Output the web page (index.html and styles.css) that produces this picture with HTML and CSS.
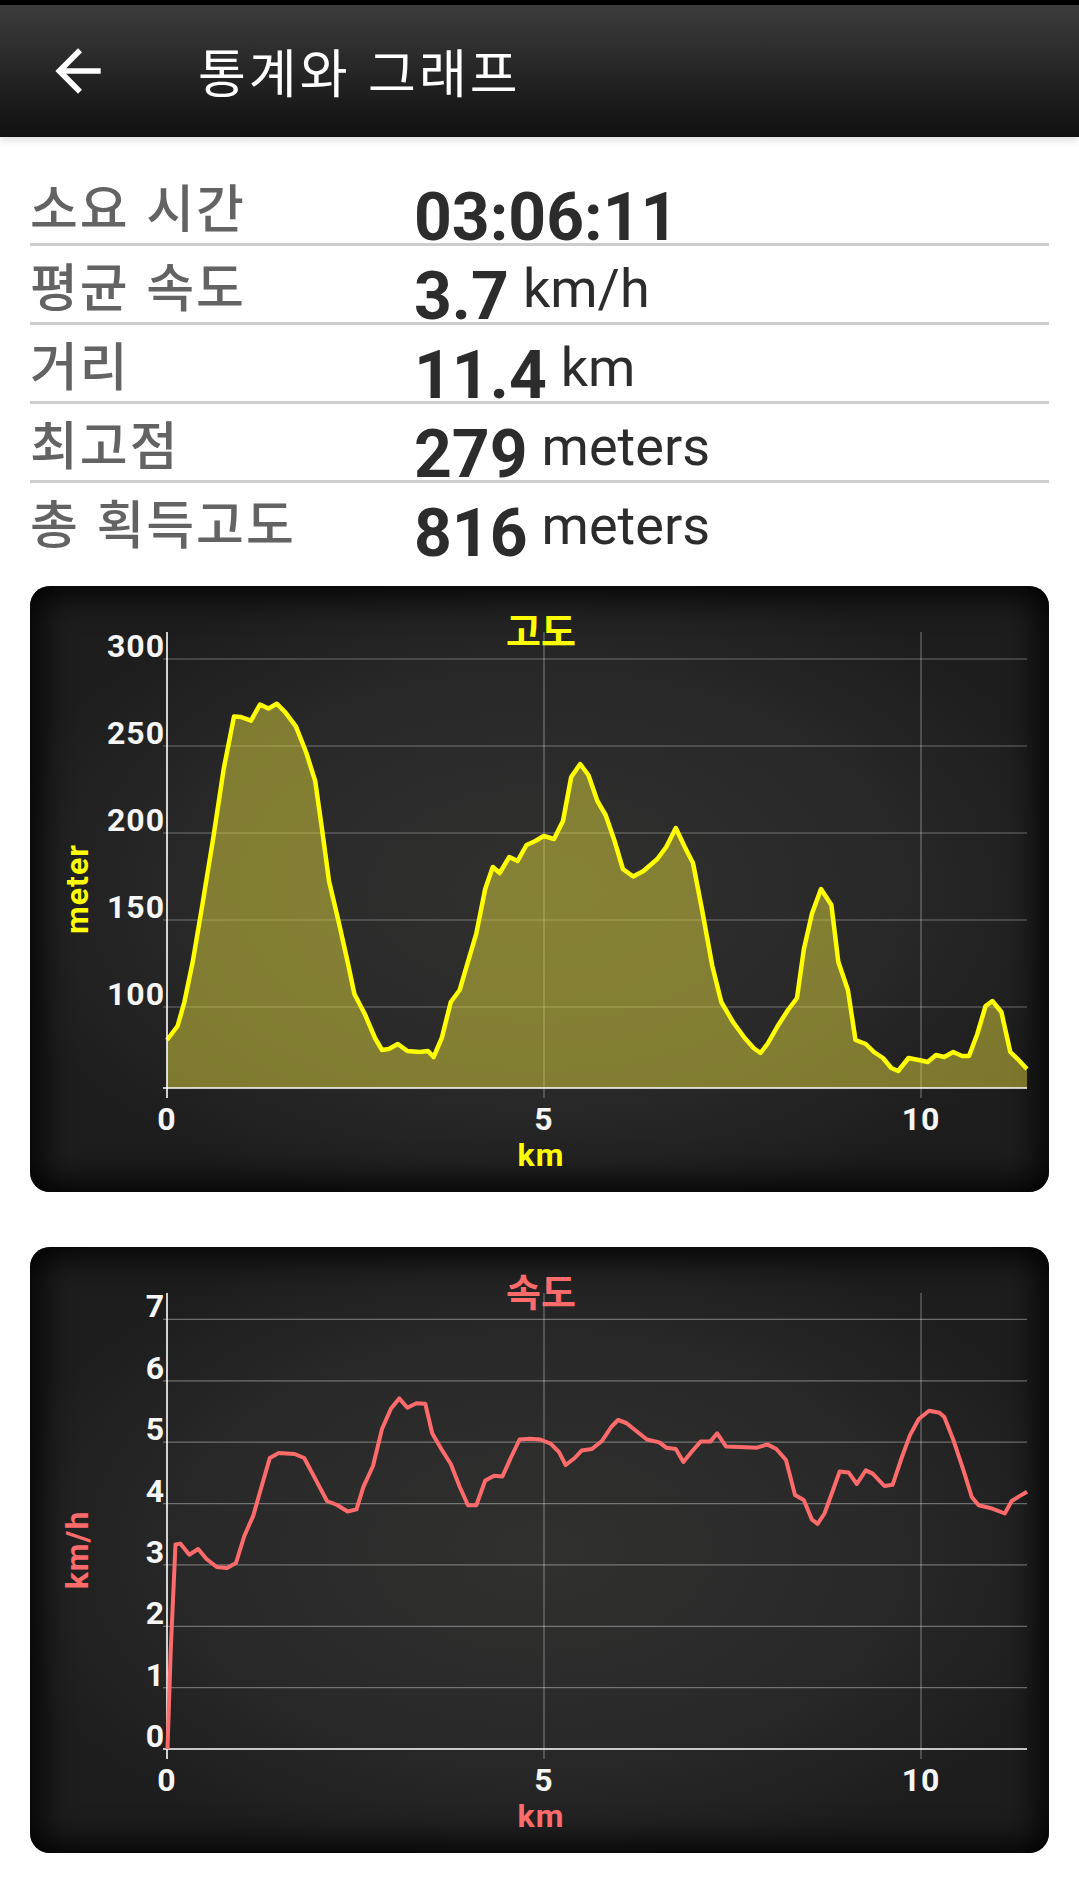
FILE: index.html
```html
<!DOCTYPE html>
<html lang="ko">
<head>
  <meta charset="UTF-8" />
  <meta name="viewport" content="width=device-width, initial-scale=1.0" />
  <title>통계와 그래프</title>
  <link rel="stylesheet" href="styles.css">
</head>
<body>
<header class="toolbar">
  <button class="back-btn" type="button" aria-label="뒤로">
    <svg viewBox="0 0 24 24"><path d="M20 11H7.83l5.59-5.59L12 4l-8 8 8 8 1.41-1.41L7.83 13H20v-2z"/></svg>
  </button>
  <h1>통계와 그래프</h1>
</header>

<main class="content">
  <section class="stats">
    <div class="stat-row">
      <span class="stat-label">소요 시간</span>
      <span class="stat-value">03:06:11</span>
    </div>
    <div class="stat-row">
      <span class="stat-label">평균 속도</span>
      <span class="stat-value">3.7<span class="unit">km/h</span></span>
    </div>
    <div class="stat-row">
      <span class="stat-label">거리</span>
      <span class="stat-value">11.4<span class="unit">km</span></span>
    </div>
    <div class="stat-row">
      <span class="stat-label">최고점</span>
      <span class="stat-value">279<span class="unit">meters</span></span>
    </div>
    <div class="stat-row">
      <span class="stat-label">총 획득고도</span>
      <span class="stat-value">816<span class="unit">meters</span></span>
    </div>
  </section>

  <!-- elevation chart -->
  <section class="chart-card">
    <svg class="chart elevation" viewBox="0 0 1019 606">
      <g class="grid">
        <line x1="133" y1="73" x2="997" y2="73"/>
        <line x1="133" y1="160" x2="997" y2="160"/>
        <line x1="133" y1="247" x2="997" y2="247"/>
        <line x1="133" y1="334" x2="997" y2="334"/>
        <line x1="133" y1="421" x2="997" y2="421"/>
        <line x1="514" y1="46" x2="514" y2="512"/>
        <line x1="891" y1="46" x2="891" y2="512"/>
      </g>
      <polygon class="area" points="137,502 137,454 147.6,440 154.4,416 162.7,376 173,315 183.4,251 193.7,183 204,130.6 211,131 221,134.6 230,118.5 238.4,122.6 246.7,117.7 255.6,126.6 266,140.6 276.3,166.8 285.2,195 292,243 299,295 308.6,335.5 317.6,375.7 324.4,408 334.8,428 345,452 352,464 358.8,463 367.8,458 377.4,465 389.8,466 398,465 403.6,471 411.8,452 420.8,416 429.7,404 438,375.7 446.3,347.6 455.2,303 462.8,281 469.7,287 479.3,271 487.6,275 496.5,259 505.4,255 513.7,250 524,253 533,235 541.2,191 550.2,178 558.4,189 567.4,215 575.6,229 584.6,255 592.9,283 603.2,290.5 613.5,285 627.3,273 636.2,261 645.8,242 654.8,261 663,277 672,323.5 682.3,380 691.3,416 703,436 714.7,452 723.6,462 730.5,467 737.4,458 747.7,440 758,424 767,412 773.8,363.6 782,327.5 791,303 801.4,319 808.3,375.7 817.9,404 825.5,454 835.8,458 844,466 853,472 861.3,482 868.2,485 878.5,472 888.8,474 897.7,476 906,469 914.3,471 923.2,466 932.2,470 939,470 947.3,448 955.6,420 962.4,415 971.4,426 980.3,466 988.6,474 997,483 997,502"/>
      <polyline class="line" points="137,454 147.6,440 154.4,416 162.7,376 173,315 183.4,251 193.7,183 204,130.6 211,131 221,134.6 230,118.5 238.4,122.6 246.7,117.7 255.6,126.6 266,140.6 276.3,166.8 285.2,195 292,243 299,295 308.6,335.5 317.6,375.7 324.4,408 334.8,428 345,452 352,464 358.8,463 367.8,458 377.4,465 389.8,466 398,465 403.6,471 411.8,452 420.8,416 429.7,404 438,375.7 446.3,347.6 455.2,303 462.8,281 469.7,287 479.3,271 487.6,275 496.5,259 505.4,255 513.7,250 524,253 533,235 541.2,191 550.2,178 558.4,189 567.4,215 575.6,229 584.6,255 592.9,283 603.2,290.5 613.5,285 627.3,273 636.2,261 645.8,242 654.8,261 663,277 672,323.5 682.3,380 691.3,416 703,436 714.7,452 723.6,462 730.5,467 737.4,458 747.7,440 758,424 767,412 773.8,363.6 782,327.5 791,303 801.4,319 808.3,375.7 817.9,404 825.5,454 835.8,458 844,466 853,472 861.3,482 868.2,485 878.5,472 888.8,474 897.7,476 906,469 914.3,471 923.2,466 932.2,470 939,470 947.3,448 955.6,420 962.4,415 971.4,426 980.3,466 988.6,474 997,483"/>
      <g class="axis">
        <line x1="137" y1="46" x2="137" y2="512"/>
        <line x1="133" y1="502" x2="997" y2="502"/>
      </g>
      <g class="tick-y">
        <text x="135" y="71">300</text>
        <text x="135" y="158">250</text>
        <text x="135" y="245">200</text>
        <text x="135" y="332">150</text>
        <text x="135" y="419">100</text>
      </g>
      <g class="tick-x">
        <text x="137" y="544">0</text>
        <text x="514" y="544">5</text>
        <text x="891" y="544">10</text>
      </g>
      <text class="chart-title" x="511" y="59">고도</text>
      <text class="axis-title" x="511" y="580">km</text>
      <text class="axis-title" transform="translate(58 303) rotate(-90)">meter</text>
    </svg>
  </section>

  <!-- speed chart -->
  <section class="chart-card">
    <svg class="chart speed" viewBox="0 0 1019 606">
      <g class="grid">
        <line x1="133" y1="72.4" x2="997" y2="72.4"/>
        <line x1="133" y1="133.9" x2="997" y2="133.9"/>
        <line x1="133" y1="195.2" x2="997" y2="195.2"/>
        <line x1="133" y1="256.6" x2="997" y2="256.6"/>
        <line x1="133" y1="317.9" x2="997" y2="317.9"/>
        <line x1="133" y1="379.3" x2="997" y2="379.3"/>
        <line x1="133" y1="440.6" x2="997" y2="440.6"/>
        <line x1="514" y1="46" x2="514" y2="512"/>
        <line x1="891" y1="46" x2="891" y2="512"/>
      </g>
      <g class="axis">
        <line x1="137" y1="46" x2="137" y2="512"/>
        <line x1="133" y1="502" x2="997" y2="502"/>
      </g>
      <polyline class="line" points="137.5,502 140.7,404 145.5,297.4 150.3,296.6 159.3,307.7 168.2,302 176.5,312 186.8,320 197,321 206,316 214.3,289 223.3,268.6 231.5,239.8 239.8,211 248.7,206 264.6,207 274.2,211 285.2,231.6 297,254 307.2,258 317.6,264.5 326.5,262.4 333.4,239.8 343,219 352,182 360.9,161.7 369.2,151.4 377.4,160.8 386.4,156.3 395.3,156.7 402.2,186.3 411.8,202.8 420.8,217 429.7,239.8 438,258.3 446.3,258.3 455.2,233.6 464.2,228.7 472.4,229.5 480.7,211 489.6,192.5 500,191.7 510.3,192.5 520.6,196.6 528.9,204.8 535.7,218 544.7,211 551.6,203.6 561.9,202 572.2,193.7 581.2,180 588,173 596.3,176 606.6,184.3 617,192.5 629.3,195.4 636.2,200.7 645.8,202 653.4,215 661.7,204.8 670.6,194.6 680.3,194.6 687.2,186.3 696,199.5 709.8,200 727,200.7 737.4,197.4 746.3,202 756,213 765,248 773.8,253 782,272.7 787.6,276.8 794.5,266.5 802.7,244 809.6,224.6 818.6,225.4 826.8,237 835.8,223.4 842.7,226.6 854.4,239 862.6,237.8 871.6,211 879.9,188.4 888.8,172 899.1,163.7 909.5,165.8 914.3,170 923.2,192.5 933.5,223.4 941.8,250 948.7,258.3 961,261.2 974.8,266.5 981.7,254 990,248.9 997,244.7"/>
      <g class="tick-y">
        <text x="135" y="70.4">7</text>
        <text x="135" y="131.9">6</text>
        <text x="135" y="193.2">5</text>
        <text x="135" y="254.6">4</text>
        <text x="135" y="315.9">3</text>
        <text x="135" y="377.3">2</text>
        <text x="135" y="438.6">1</text>
        <text x="135" y="500">0</text>
      </g>
      <g class="tick-x">
        <text x="137" y="544">0</text>
        <text x="514" y="544">5</text>
        <text x="891" y="544">10</text>
      </g>
      <text class="chart-title" x="511" y="59">속도</text>
      <text class="axis-title" x="511" y="580">km</text>
      <text class="axis-title" transform="translate(58 303) rotate(-90)">km/h</text>
    </svg>
  </section>
</main>
</body>
</html>
```

FILE: styles.css
```css
html, body {
  margin: 0; padding: 0;
  background: #fff;
  font-family: Roboto, 'Noto Sans CJK KR', sans-serif;
}
.toolbar {
  display: flex;
  align-items: center;
  height: 132px;
  border-top: 5px solid #000;
  padding-left: 44px;
  background: linear-gradient(#3c3c3c, #101010);
  box-shadow: 0 3px 8px rgba(0,0,0,0.15);
  color: #fff;
}
.back-btn {
  width: 68px; height: 68px;
  padding: 0;
  border: none;
  background: none;
}
.back-btn svg {
  display: block;
  width: 68px; height: 68px;
  fill: #fff;
}
.toolbar h1 {
  margin: 0 0 0 86px;
  font-family: 'Noto Sans CJK KR', sans-serif;
  font-size: 52px;
  font-weight: 400;
  line-height: 52px;
  letter-spacing: 3px;
}
.content {
  padding: 30px 30px 0 30px;
}
.stat-row {
  display: grid;
  grid-template-columns: 384px 1fr;
  align-items: end;
  height: 76px;
  border-bottom: 3px solid #cdcdcd;
}
.stat-row:last-child {
  border-bottom-color: transparent;
}
.stat-label {
  padding: 0 0 11px 0;
  font-family: 'Noto Sans CJK KR', sans-serif;
  font-size: 52px;
  font-weight: 500;
  line-height: 52px;
  letter-spacing: 2px;
  color: #636363;
  white-space: nowrap;
}
.stat-value {
  font-family: Roboto, sans-serif;
  font-size: 66px;
  font-weight: 700;
  line-height: 50px;
  color: #2c2c2c;
  white-space: nowrap;
}
.unit {
  margin-left: 14px;
  font-size: 54px;
  font-weight: 400;
  line-height: 0;
  vertical-align: 12px;
}
.chart-card {
  height: 606px;
  margin-top: 24px;
  border-radius: 20px;
  background: radial-gradient(ellipse 55% 55% at 50% 50%, #30312f 0%, #282928 60%, #1d1d1d 100%);
  box-shadow: inset 0 0 34px 8px #000;
  overflow: hidden;
}
.chart-card + .chart-card {
  margin-top: 55px;
}
.chart {
  display: block;
  width: 100%;
  height: 100%;
}
.grid line {
  stroke: rgba(255,255,255,0.35);
  stroke-width: 1.2;
}
.axis line {
  stroke: #fff;
  stroke-width: 1.6;
}
.chart text {
  font-family: Roboto, 'Noto Sans CJK KR', sans-serif;
  font-weight: 700;
  font-size: 32px;
  letter-spacing: 1px;
}
.tick-y text {
  fill: #f6f6f6;
  text-anchor: end;
}
.tick-x text {
  fill: #f6f6f6;
  text-anchor: middle;
}
.chart .chart-title {
  font-family: 'Noto Sans CJK KR', sans-serif;
  font-size: 38px;
  letter-spacing: 0;
  text-anchor: middle;
}
.axis-title {
  text-anchor: middle;
}
.elevation .area {
  fill: rgba(220,210,60,0.5);
}
.elevation .line {
  fill: none;
  stroke: #ffff00;
  stroke-width: 4.5;
  stroke-linejoin: round;
}
.elevation .chart-title, .elevation .axis-title {
  fill: #ffff00;
}
.speed .line {
  fill: none;
  stroke: #ff6b6b;
  stroke-width: 4;
  stroke-linejoin: round;
}
.speed .chart-title, .speed .axis-title {
  fill: #ff6b6b;
}
```
